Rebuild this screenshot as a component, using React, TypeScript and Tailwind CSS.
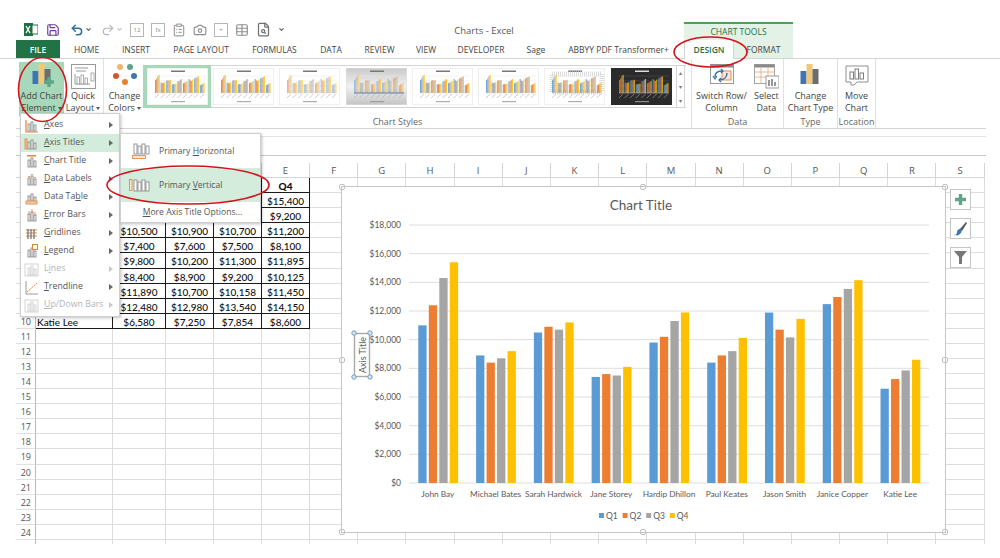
import React from 'react';
import { Save, Undo2, Redo2, Camera, ClipboardList, Table, FileSearch, ChevronDown } from 'lucide-react';

type Person = { name: string; q: number[] };

const people: Person[] = [
  { name: 'John Bay', q: [11000, 12400, 14300, 15400] },
  { name: 'Michael Bates', q: [8900, 8400, 8700, 9200] },
  { name: 'Sarah Hardwick', q: [10500, 10900, 10700, 11200] },
  { name: 'Jane Storey', q: [7400, 7600, 7500, 8100] },
  { name: 'Hardip Dhillon', q: [9800, 10200, 11300, 11895] },
  { name: 'Paul Keates', q: [8400, 8900, 9200, 10125] },
  { name: 'Jason Smith', q: [11890, 10700, 10158, 11450] },
  { name: 'Janice Copper', q: [12480, 12980, 13540, 14150] },
  { name: 'Katie Lee', q: [6580, 7250, 7854, 8600] }
];

const barColors = ['#5b9bd5', '#ed7d31', '#a5a5a5', '#ffc000'];
const columns = 'ABCDEFGHIJKLMNOPQRS'.split('');
const money = (n: number) => `$${n.toLocaleString('en-US')}`;

const tabs = [
  { label: 'HOME', w: 'w-[27px]' },
  { label: 'INSERT', w: 'w-[29px]' },
  { label: 'PAGE LAYOUT', w: 'w-[58px]' },
  { label: 'FORMULAS', w: 'w-[46px]' },
  { label: 'DATA', w: 'w-[24px]' },
  { label: 'REVIEW', w: 'w-[30px]' },
  { label: 'VIEW', w: 'w-[20px]' },
  { label: 'DEVELOPER', w: 'w-[47px]' },
  { label: 'Sage', w: 'w-[20px]' },
  { label: 'ABBYY PDF Transformer+', w: 'w-[102px]' }
];

const QatBox = ({ children }: { children: React.ReactNode }) => (
  <span className="flex h-[14px] w-[14px] items-center justify-center border border-[#b5b5b5] text-[6px] leading-none text-[#8a8a8a]">
    {children}
  </span>
);

const QuickAccess = () => (
  <div className="flex items-center gap-[7px] pl-[24px]">
    <svg width="14" height="13" viewBox="0 0 14 13">
      <rect x="0" y="0" width="9" height="13" fill="#1e7145" />
      <rect x="8" y="2" width="6" height="9" fill="#fff" stroke="#1e7145" />
      <path d="M2 3l4 7M6 3l-4 7" stroke="#fff" strokeWidth="1.3" />
    </svg>
    <Save size={14} className="ml-[1px] text-[#6a3d9a]" />
    <div className="ml-[3px] flex items-center gap-[1px]">
      <Undo2 size={14} strokeWidth={2.6} className="text-[#2f6fa8]" />
      <ChevronDown size={7} strokeWidth={4} className="text-[#666]" />
    </div>
    <div className="ml-[2px] flex items-center gap-[1px]">
      <Redo2 size={14} className="text-[#b5b5b5]" />
      <ChevronDown size={7} strokeWidth={4} className="text-[#c4c4c4]" />
    </div>
    <QatBox>12</QatBox>
    <QatBox>fx</QatBox>
    <ClipboardList size={14} className="text-[#a0a0a0]" />
    <Camera size={14} className="text-[#8f8f8f]" />
    <QatBox>+</QatBox>
    <Table size={14} className="text-[#8f8f8f]" />
    <FileSearch size={15} className="text-[#707070]" />
    <ChevronDown size={7} strokeWidth={4} className="text-[#666]" />
  </div>
);

const BarsIcon = ({ plus }: { plus?: boolean }) => (
  <svg width="32" height="28" viewBox="0 0 32 28">
    <rect x="6.5" y="9" width="6" height="13" fill="#3f75b5" />
    <rect x="12.5" y="2" width="6" height="20" fill="#f0c878" />
    <rect x="18.5" y="7" width="6" height="15" fill="#6d6d6d" />
    {plus && <path d="M23 15v10M18 20h10" stroke="#5fa588" strokeWidth="3.4" />}
  </svg>
);

const QuickLayoutIcon = () => (
  <svg width="25" height="25" viewBox="0 0 25 25">
    <rect x="0.5" y="0.5" width="24" height="24" fill="#fff" stroke="#9a9a9a" />
    <path d="M4 4h13M5 7h10" stroke="#9a9a9a" />
    <path d="M4 10v10h15" stroke="#9a9a9a" fill="none" />
    <rect x="6" y="13" width="2.5" height="7" fill="#fff" stroke="#8a8a8a" strokeWidth="0.7" />
    <rect x="10" y="11" width="2.5" height="9" fill="#fff" stroke="#8a8a8a" strokeWidth="0.7" />
    <rect x="14" y="14" width="2.5" height="6" fill="#fff" stroke="#8a8a8a" strokeWidth="0.7" />
    <rect x="20" y="9" width="3" height="8" fill="#fff" stroke="#8a8a8a" strokeWidth="0.7" />
  </svg>
);

const ColorsIcon = () => (
  <svg width="26" height="26" viewBox="0 0 26 26">
    <circle cx="8" cy="4" r="3" fill="#eeb868" />
    <circle cx="18" cy="4" r="3" fill="#5fa388" />
    <circle cx="4" cy="13" r="3" fill="#d3542d" />
    <circle cx="22" cy="13" r="3" fill="#3f75b5" />
    <circle cx="13" cy="19" r="3" fill="#e5822d" />
  </svg>
);

const SwitchIcon = () => (
  <svg width="24" height="24" viewBox="0 0 24 24">
    <rect x="0.5" y="0.5" width="23" height="19" fill="#fff" stroke="#9a9a9a" />
    <rect x="0.5" y="0.5" width="23" height="3" fill="#8a8a8a" />
    <rect x="12" y="7" width="9" height="9" fill="#fbe5d6" stroke="#e58b4e" />
    <path d="M5 13c0-4 3-6 7-6M17 9c0 4-3 7-8 7" fill="none" stroke="#2f6fa8" strokeWidth="1.4" />
    <path d="M3 12l2 3 2-3M11 5l2 2-2 2M11 14l-2 2 2 2" fill="none" stroke="#2f6fa8" strokeWidth="1.2" />
  </svg>
);

const SelectDataIcon = () => (
  <svg width="25" height="25" viewBox="0 0 25 25">
    <rect x="0.5" y="0.5" width="20" height="19" fill="#fff" stroke="#a5a5a5" />
    <rect x="0.5" y="0.5" width="20" height="3" fill="#8a8a8a" />
    <path d="M1 8h20M1 13h20M7 4v16M14 4v16" stroke="#e9a677" strokeWidth="0.8" />
    <rect x="12" y="12" width="13" height="12" fill="#fff" stroke="#9a9a9a" />
    <path d="M15 22v-6M18 22v-7M21 22v-4" stroke="#777" strokeWidth="1.5" />
  </svg>
);

const MoveChartIcon = () => (
  <svg width="24" height="23" viewBox="0 0 24 23">
    <path d="M1 1h22v16H12l-3 3H6v-3H1z" fill="#fff" stroke="#8f8f8f" />
    <rect x="5" y="7" width="3.5" height="7" fill="#fff" stroke="#7c7c7c" />
    <rect x="10" y="4" width="3.5" height="10" fill="#fff" stroke="#7c7c7c" />
    <rect x="15" y="8" width="3.5" height="6" fill="#fff" stroke="#7c7c7c" />
  </svg>
);

const RibbonButton = ({
  icon,
  lines,
  className = ''
}: {
  icon: React.ReactNode;
  lines: React.ReactNode[];
  className?: string;
}) => (
  <div className={`flex shrink-0 flex-col items-center ${className}`}>
    <div className="flex h-[28px] items-center justify-center">{icon}</div>
    {lines.map((line, i) => (
      <span key={i} className="whitespace-nowrap text-[9px] leading-[12px] text-[#444]">
        {line}
      </span>
    ))}
  </div>
);

const Caret = () => <span className="ml-[2px] inline-block border-x-[2.5px] border-t-[3px] border-x-transparent border-t-[#555] align-middle" />;

const Thumb = ({ kind }: { kind: number }) => {
  const dark = kind === 7;
  const gray = kind === 3;
  const pale = kind === 2 || gray;
  return (
    <svg width="61" height="37" viewBox="0 0 61 37" className="shrink-0">
      <defs>
        <linearGradient id="thumbGray" x1="0" y1="0" x2="0" y2="1">
          <stop offset="0" stopColor="#c9c9c9" />
          <stop offset="0.5" stopColor="#f0f0f0" />
          <stop offset="1" stopColor="#c4c4c4" />
        </linearGradient>
      </defs>
      <rect width="61" height="37" fill={dark ? '#2b2b2b' : gray ? 'url(#thumbGray)' : '#fff'} stroke={dark ? 'none' : '#e2e2e2'} />
      <rect x="24" y="2.5" width="14" height="1.5" fill={dark ? '#ddd' : '#777'} />
      {kind === 6 && <rect x="8" y="6" width="50" height="18" fill="none" stroke="#dcdcdc" strokeDasharray="1 1" strokeWidth="5" />}
      {[8, 13, 18, 23].map((y) => (
        <path key={y} d={`M8 ${y}h50`} stroke={dark ? '#555' : '#e6e6e6'} strokeWidth="0.5" />
      ))}
      {people.map((p, g) =>
        p.q.map((v, b) => (
          <rect
            key={`${g}-${b}`}
            x={8 + g * 5.6 + b * 1.2}
            y={25 - v / 850}
            width="1.1"
            height={v / 850}
            fill={barColors[b]}
            opacity={pale ? 0.55 : 0.85}
          />
        ))
      )}
      <path d="M8 25h50" stroke={gray ? '#5b7fa8' : '#ccc'} strokeWidth={gray ? 1 : 0.5} />
      {people.map((_, g) => (
        <path key={g} d={`M${8 + g * 5.6} 30l4-4`} stroke="#aaa" strokeWidth="0.6" />
      ))}
      <rect x="24" y="33" width="14" height="1.2" fill={dark ? '#bbb' : '#8a8a8a'} opacity="0.7" />
    </svg>
  );
};

const groupLabel = 'h-[13px] text-center text-[9px] leading-[14px] text-[#666]';

const Ribbon = () => (
  <div className="ml-[16px] flex h-[70px] w-[970px] border-b border-[#d4d4d4]">
    <div className="flex w-[88px] shrink-0 gap-[2px] border-r border-[#e1e1e1] pl-[3px] pt-[3px]">
      <RibbonButton
        className="h-[54px] w-[45px] bg-[#a8d8ba]"
        icon={<BarsIcon plus />}
        lines={['Add Chart', <>Element<Caret /></>]}
      />
      <RibbonButton className="w-[34px]" icon={<QuickLayoutIcon />} lines={['Quick', <>Layout<Caret /></>]} />
    </div>

    <div className="flex w-[588px] shrink-0 flex-col border-r border-[#e1e1e1]">
      <div className="flex flex-1 items-start pt-[3px]">
        <RibbonButton className="w-[39px] pl-[2px]" icon={<ColorsIcon />} lines={['Change', <>Colors<Caret /></>]} />
        <div className="mt-[3px] flex h-[43px] w-[543px] items-center border-y border-[#d4d4d4]">
          <div className="flex h-[43px] w-[68px] shrink-0 items-center justify-center bg-[#a8d8ba]">
            <Thumb kind={0} />
          </div>
          <div className="ml-[2px] flex gap-[5.3px]">
            {[1, 2, 3, 4, 5, 6, 7].map((k) => (
              <Thumb key={k} kind={k} />
            ))}
          </div>
          <div className="ml-[4px] flex h-full w-[9px] flex-col border-x border-[#d4d4d4] text-center text-[6px] leading-[14px] text-[#777]">
            <span>▴</span>
            <span>▾</span>
            <span>▾</span>
          </div>
        </div>
      </div>
      <div className={groupLabel}>Chart Styles</div>
    </div>

    <div className="flex w-[92px] shrink-0 flex-col border-r border-[#e1e1e1]">
      <div className="flex flex-1 justify-center gap-[7px] pt-[3px]">
        <RibbonButton icon={<SwitchIcon />} lines={['Switch Row/', 'Column']} />
        <RibbonButton icon={<SelectDataIcon />} lines={['Select', 'Data']} />
      </div>
      <div className={groupLabel}>Data</div>
    </div>

    <div className="flex w-[54px] shrink-0 flex-col border-r border-[#e1e1e1]">
      <div className="flex flex-1 justify-center pt-[3px]">
        <RibbonButton icon={<BarsIcon />} lines={['Change', 'Chart Type']} />
      </div>
      <div className={groupLabel}>Type</div>
    </div>

    <div className="flex w-[38px] shrink-0 flex-col border-r border-[#e1e1e1]">
      <div className="flex flex-1 justify-center pt-[3px]">
        <RibbonButton icon={<MoveChartIcon />} lines={['Move', 'Chart']} />
      </div>
      <div className={groupLabel}>Location</div>
    </div>
  </div>
);

const Sheet = () => {
  const rows = Array.from({ length: 25 }, (_, i) => i + 1);
  return (
    <div className="ml-[16px] grid h-[381px] w-[969px] grid-cols-[20px_77px_53px_48px_48px_48px_repeat(14,48.2px)] auto-rows-[15.08px] overflow-hidden font-['Lato',sans-serif] text-[10px] leading-[16px]">
      <div className="border-b border-r border-[#d4d4d4]" />
      {columns.map((c, ci) => (
        <div key={c} className="border-b border-r border-[#d4d4d4] text-center font-['Open_Sans',sans-serif] text-[9.5px] text-[#555]">
          {ci > 3 ? c : ''}
        </div>
      ))}
      {rows.map((r) => {
        const person = people[r - 2];
        return (
          <React.Fragment key={r}>
            {/* rows 1-9 of the header sit under the open menu */}
            <div className="border-b border-r border-b-[#e0e0e0] border-r-[#b8b8b8] pr-[4px] text-right font-['Open_Sans',sans-serif] text-[9px] text-[#555]">
              {r >= 10 && r <= 24 ? r : ''}
            </div>
            {columns.map((c, ci) => {
              if (r <= 10 && ci < 5) {
                let text = '';
                if (r === 1 && ci === 4) text = 'Q4';
                if (r === 10 && ci === 0) text = person.name;
                if (r > 1 && ci === 4) text = money(person.q[3]);
                if (r > 3 && ci > 0 && ci < 4) text = money(person.q[ci - 1]);
                return (
                  <div
                    key={c}
                    className={`border-b border-r border-[#1a1a1a] text-[#111] ${r === 1 ? 'font-black' : 'font-medium'} ${ci === 0 ? 'pl-[1px]' : 'text-center'}`}
                  >
                    {text}
                  </div>
                );
              }
              return <div key={c} className="border-b border-r border-[#dcdcdc]" />;
            })}
          </React.Fragment>
        );
      })}
    </div>
  );
};

const Chart = () => {
  const plotLeft = 409;
  const plotRight = 929;
  const baseY = 483;
  const scale = 258 / 18000;
  const groupW = (plotRight - plotLeft) / 9;
  const ticks = [0, 2000, 4000, 6000, 8000, 10000, 12000, 14000, 16000, 18000];
  const handles = [
    [342, 187],
    [643, 187],
    [945, 187],
    [342, 360],
    [945, 360],
    [342, 532],
    [643, 532],
    [945, 532]
  ];
  return (
    <div className="absolute left-[342px] top-[187px] h-[345px] w-[603px] bg-white outline outline-[1.5px] outline-[#c6c6c6]">
      <svg width="603" height="345" viewBox="342 187 603 345" className="overflow-visible font-['Lato',sans-serif]">
        <text x="641" y="210" textAnchor="middle" fontSize="13.5" fill="#595959">Chart Title</text>
        {ticks.map((t) => {
          const y = baseY - t * scale;
          return (
            <g key={t}>
              <path d={`M${plotLeft} ${y}H${plotRight}`} stroke="#dedede" strokeWidth="1" />
              <text x="401" y={y + 3} textAnchor="end" fontSize="8.5" fill="#595959">{money(t)}</text>
            </g>
          );
        })}
        {people.map((p, g) => (
          <g key={p.name}>
            {p.q.map((v, b) => (
              <rect
                key={b}
                x={plotLeft + 9.3 + g * groupW + b * 10.5}
                y={baseY - v * scale}
                width="8.3"
                height={v * scale}
                fill={barColors[b]}
              />
            ))}
            <text x={plotLeft + groupW * (g + 0.5)} y="497" textAnchor="middle" fontSize="8.3" fill="#595959">{p.name}</text>
          </g>
        ))}
        {barColors.map((color, i) => (
          <g key={color}>
            <rect x={599 + i * 23.6} y="513" width="5" height="5" fill={color} />
            <text x={606 + i * 23.6} y="518.5" fontSize="8.5" fill="#595959">{`Q${i + 1}`}</text>
          </g>
        ))}
        <rect x="354.5" y="333.5" width="15" height="43" fill="#fff" stroke="#a8a8a8" strokeWidth="1.4" />
        <text transform="translate(366 355) rotate(-90)" textAnchor="middle" fontSize="9" fill="#595959">Axis Title</text>
        {[[354, 333], [370, 333], [354, 377], [370, 377]].map(([x, y]) => (
          <circle key={`${x}-${y}`} cx={x} cy={y} r="2.2" fill="#dbe8f3" stroke="#6f9cc2" />
        ))}
        {handles.map(([x, y]) => (
          <rect key={`${x}-${y}`} x={x - 2.5} y={y - 2.5} width="5" height="5" rx="1.5" fill="#fff" stroke="#c0c0c0" />
        ))}
      </svg>
    </div>
  );
};

const SideButtons = () => (
  <div className="absolute left-[950px] top-[189px] flex flex-col gap-[8px]">
    <div className="flex h-[21px] w-[21px] items-center justify-center border border-[#c6c6c6] bg-white">
      <svg width="13" height="13" viewBox="0 0 13 13">
        <path d="M6.5 1v11M1 6.5h11" stroke="#5fa588" strokeWidth="3.4" />
      </svg>
    </div>
    <div className="flex h-[21px] w-[21px] items-center justify-center border border-[#c6c6c6] bg-white">
      <svg width="15" height="15" viewBox="0 0 15 15">
        <path d="M7 8l6-7 1 1-5 8z" fill="#555" />
        <path d="M1 14c2 0 3-1 3-3 0-2 3-4 4-3s1 3-1 5-4 1-6 1z" fill="#3f75b5" />
      </svg>
    </div>
    <div className="flex h-[21px] w-[21px] items-center justify-center border border-[#c6c6c6] bg-white">
      <svg width="15" height="15" viewBox="0 0 15 15">
        <path d="M1 1h13L9 7v7H6V7z" fill="#777" />
      </svg>
    </div>
  </div>
);

// small menu glyphs: gray bars plus an orange accent per item
const MenuIcon = ({ kind, off }: { kind: string; off?: boolean }) => {
  const stroke = off ? '#c8c8c8' : '#808080';
  const accent = off ? '#c8c8c8' : '#e0823a';
  return (
    <svg width="15" height="15" viewBox="0 0 15 15" className="shrink-0">
      {kind !== 'trend' && kind !== 'grid' && (
        <>
          <rect x="4" y="6" width="2" height="7" fill="#fff" stroke={stroke} strokeWidth="0.8" />
          <rect x="7" y="4" width="2" height="9" fill="#fff" stroke={stroke} strokeWidth="0.8" />
          <rect x="10" y="7" width="2" height="6" fill="#fff" stroke={stroke} strokeWidth="0.8" />
        </>
      )}
      {kind === 'axes' && <path d="M2 2v12h12" fill="none" stroke={accent} strokeWidth="1.2" />}
      {kind === 'axistitle' && <rect x="1" y="3" width="2" height="10" fill="#f5c9a8" stroke={accent} strokeWidth="0.8" />}
      {kind === 'charttitle' && <rect x="3" y="1" width="9" height="1.5" fill={accent} />}
      {kind === 'labels' && <path d="M5 4v1M8 2v1M11 5v1" stroke={accent} strokeWidth="1.5" />}
      {kind === 'table' && <rect x="2" y="11" width="11" height="3" fill="#f5c9a8" stroke={accent} strokeWidth="0.8" />}
      {kind === 'error' && <path d="M5 3v4M8 1v4M11 4v4" stroke={accent} strokeWidth="0.8" />}
      {kind === 'grid' && (
        <>
          <path d="M2 4h11M2 7h11M2 10h11" stroke={accent} strokeWidth="1" />
          <path d="M4 13V3M7 13V3M10 13V3" stroke={stroke} strokeWidth="1.4" />
        </>
      )}
      {kind === 'legend' && <rect x="8.5" y="0.5" width="5" height="5" fill="#fff" stroke={accent} strokeWidth="1" />}
      {kind === 'lines' && <rect x="1" y="2" width="13" height="12" fill="none" stroke={stroke} strokeWidth="0.8" />}
      {kind === 'trend' && (
        <>
          <path d="M2 1v13h12" fill="none" stroke={stroke} strokeWidth="0.8" />
          <path d="M3 12L13 3" stroke={accent} strokeWidth="1" strokeDasharray="2 1" />
        </>
      )}
      {kind === 'updown' && <rect x="1" y="2" width="13" height="12" fill="none" stroke={stroke} strokeWidth="0.8" />}
    </svg>
  );
};

const menuItems: { kind: string; label: React.ReactNode; active?: boolean; off?: boolean }[] = [
  { kind: 'axes', label: <><u>A</u>xes</> },
  { kind: 'axistitle', label: <><u>A</u>xis Titles</>, active: true },
  { kind: 'charttitle', label: <><u>C</u>hart Title</> },
  { kind: 'labels', label: <><u>D</u>ata Labels</> },
  { kind: 'table', label: <>Data Ta<u>b</u>le</> },
  { kind: 'error', label: <><u>E</u>rror Bars</> },
  { kind: 'grid', label: <><u>G</u>ridlines</> },
  { kind: 'legend', label: <><u>L</u>egend</> },
  { kind: 'lines', label: <>L<u>i</u>nes</>, off: true },
  { kind: 'trend', label: <><u>T</u>rendline</> },
  { kind: 'updown', label: <><u>U</u>p/Down Bars</>, off: true }
];

const ElementMenu = () => (
  <div className="absolute left-[20px] top-[113px] w-[100px] border border-[#cfcfcf] bg-white pb-[2px] pt-[2px] shadow-[1px_1px_3px_rgba(0,0,0,0.25)]">
    {menuItems.map((item, i) => (
      <div key={i} className={`flex h-[18px] items-center pl-[3px] text-[8.8px] ${item.active ? 'bg-[#d3ecdc]' : ''} ${item.off ? 'text-[#b5b5b5]' : 'text-[#555]'}`}>
        <MenuIcon kind={item.kind} off={item.off} />
        <span className="ml-[5px] flex-1 whitespace-nowrap">{item.label}</span>
        <span className={`mr-[6px] border-y-[3px] border-l-[4px] border-y-transparent ${item.off ? 'border-l-[#c8c8c8]' : 'border-l-[#666]'}`} />
      </div>
    ))}
  </div>
);

const SubIcon = ({ vertical }: { vertical?: boolean }) => (
  <svg width="22" height="16" viewBox="0 0 22 16" className="shrink-0">
    {vertical ? (
      <rect x="0.5" y="2.5" width="2.5" height="11" fill="#fbe5d6" stroke="#e0823a" strokeWidth="0.8" />
    ) : (
      <rect x="3.5" y="12.5" width="13" height="3" fill="#fbe5d6" stroke="#e0823a" strokeWidth="0.8" />
    )}
    {[5, 9, 13, 17].map((x, i) => (
      <rect key={x} x={x} y={vertical ? 3 + (i % 2) * 2 : 1 + (i % 2) * 2} width="3" height={vertical ? 11 - (i % 2) * 2 : 10 - (i % 2) * 2} fill="#fff" stroke="#808080" strokeWidth="0.8" />
    ))}
  </svg>
);

const TitlesMenu = () => (
  <div className="absolute left-[120px] top-[133px] w-[141px] border border-[#cfcfcf] bg-white text-[8.6px] text-[#555] shadow-[1px_1px_3px_rgba(0,0,0,0.25)]">
    <div className="flex h-[34px] items-center pl-[8px]">
      <SubIcon />
      <span className="ml-[8px]">Primary <u>H</u>orizontal</span>
    </div>
    <div className="flex h-[34px] items-center bg-[#d3ecdc] pl-[8px]">
      <SubIcon vertical />
      <span className="ml-[8px]">Primary <u>V</u>ertical</span>
    </div>
    <div className="flex h-[20px] items-center justify-center">
      <span className="pl-[4px]"><u>M</u>ore Axis Title Options...</span>
    </div>
  </div>
);

const Annotations = () => (
  <svg width="1000" height="558" viewBox="0 0 1000 558" className="pointer-events-none absolute left-0 top-0">
    <ellipse cx="42.5" cy="89.5" rx="24" ry="32" fill="none" stroke="#d4141c" strokeWidth="1.6" />
    <ellipse cx="188" cy="185" rx="81" ry="19" fill="none" stroke="#d4141c" strokeWidth="1.6" />
    <ellipse cx="710.5" cy="52" rx="36.5" ry="15" fill="none" stroke="#d4141c" strokeWidth="1.6" />
  </svg>
);

export default function App() {
  return (
    <div className="relative h-[558px] w-[1000px] overflow-hidden bg-white font-['Open_Sans',sans-serif]">
      <div className="flex h-[40px] pt-[22px]">
        <div className="relative w-[684px] shrink-0">
          <QuickAccess />
          <div className="absolute left-[400px] top-[2px] w-[168px] text-center text-[9.5px] leading-[14px] text-[#555]">Charts - Excel</div>
        </div>
        <div className="h-[18px] w-[109px] shrink-0 border-t-2 border-[#4ca355] bg-[#e3f1e6] pt-[1px] text-center text-[8.5px] leading-[14px] text-[#217346]">
          CHART TOOLS
        </div>
      </div>

      <div className="flex h-[19px] border-b border-[#d4d4d4] text-[8.5px] leading-[20px] text-[#444]">
        <div className="ml-[16px] h-[18px] w-[44px] shrink-0 bg-[#217346] text-center font-semibold text-white">FILE</div>
        <div className="flex w-[624px] shrink-0 gap-[21.5px] pl-[13px]">
          {tabs.map((t) => (
            <div key={t.label} className={`${t.w} flex shrink-0 justify-center whitespace-nowrap`}>
              {t.label}
            </div>
          ))}
        </div>
        <div className="flex w-[109px] shrink-0 bg-[#e3f1e6]">
          <div className="h-[19px] w-[50px] border-x border-[#d4d4d4] bg-white text-center font-semibold text-[#217346]">DESIGN</div>
          <div className="flex-1 text-center">FORMAT</div>
        </div>
      </div>

      <Ribbon />

      <div className="ml-[16px] mt-[7px] h-[20px] w-[970px] border-y border-[#e4e4e4] border-b-[#c8c8c8]" />
      <div className="h-[7px]" />

      <Sheet />
      <Chart />
      <SideButtons />
      <ElementMenu />
      <TitlesMenu />
      <Annotations />
    </div>
  );
}
